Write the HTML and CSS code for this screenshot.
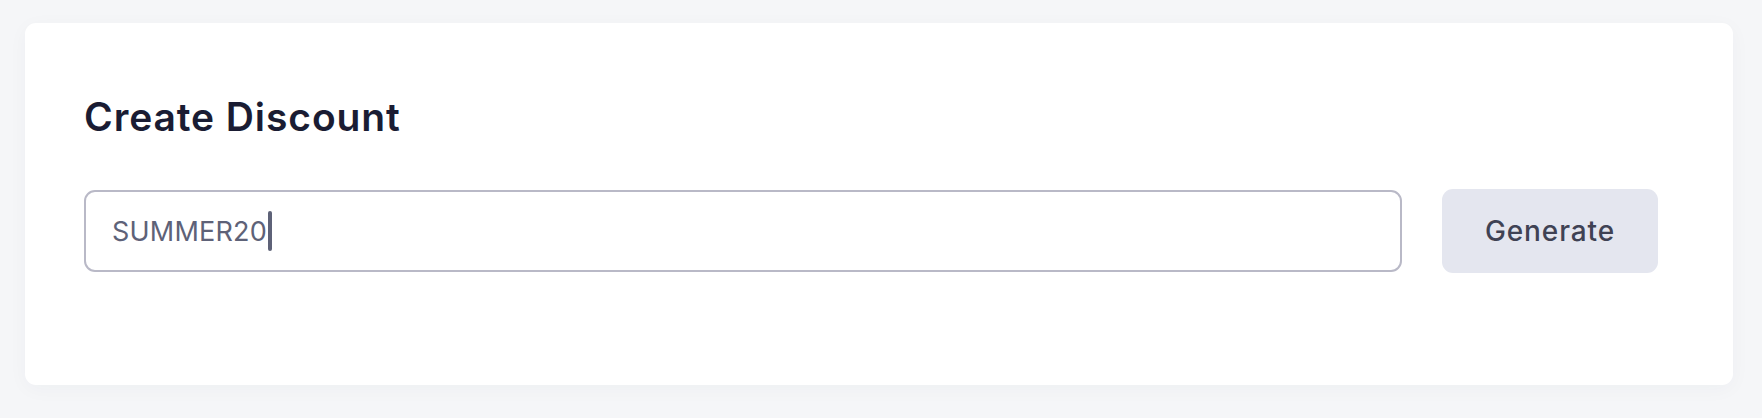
FILE: index.html
```
<!DOCTYPE html>
<html lang="en">
<head>
<meta charset="utf-8">
<title>Create Discount</title>
<link rel="stylesheet" href="styles.css">
</head>
<body>
<main class="page">
  <section class="card">
    <h1 class="title">Create Discount</h1>
    <div class="row">
      <div class="field"><span class="value">SUMMER20</span><span class="caret"></span></div>
      <button class="btn" type="button">Generate</button>
    </div>
  </section>
</main>
</body>
</html>
```
FILE: styles.css
```
html, body {
  margin: 0;
  padding: 0;
  background: #f5f6f8;
}
.page {
  padding: 23px 29px 33px 25px;
  font-family: Inter, "Noto Sans", sans-serif;
}
.card {
  background: #ffffff;
  border-radius: 11px;
  box-shadow: 0 4px 20px rgba(40, 50, 90, 0.035);
  padding: 70px 75px 0 59px;
  height: 362px;
  box-sizing: border-box;
}
.title {
  margin: 0;
  font-size: 39px;
  line-height: 48px;
  font-weight: 600;
  color: #1a1c33;
  letter-spacing: 0.9px;
}
.row {
  display: flex;
  align-items: center;
  gap: 40px;
  margin-top: 48px;
}
.field {
  flex: 1;
  height: 82px;
  box-sizing: border-box;
  border: 2px solid #b9b9c7;
  border-radius: 11px;
  display: flex;
  align-items: center;
  padding-left: 26px;
}
.value {
  font-size: 27px;
  color: #5e6278;
  letter-spacing: 0.2px;
}
.caret {
  display: inline-block;
  width: 4px;
  height: 40px;
  border-radius: 2px;
  background: #5e6278;
  margin-left: 1px;
}
.btn {
  width: 216px;
  height: 84px;
  border: 0;
  border-radius: 11px;
  background: #e4e6ef;
  color: #3f4254;
  font-family: Inter, "Noto Sans", sans-serif;
  font-size: 28px;
  font-weight: 500;
  letter-spacing: 0.9px;
  padding: 0;
}
```
